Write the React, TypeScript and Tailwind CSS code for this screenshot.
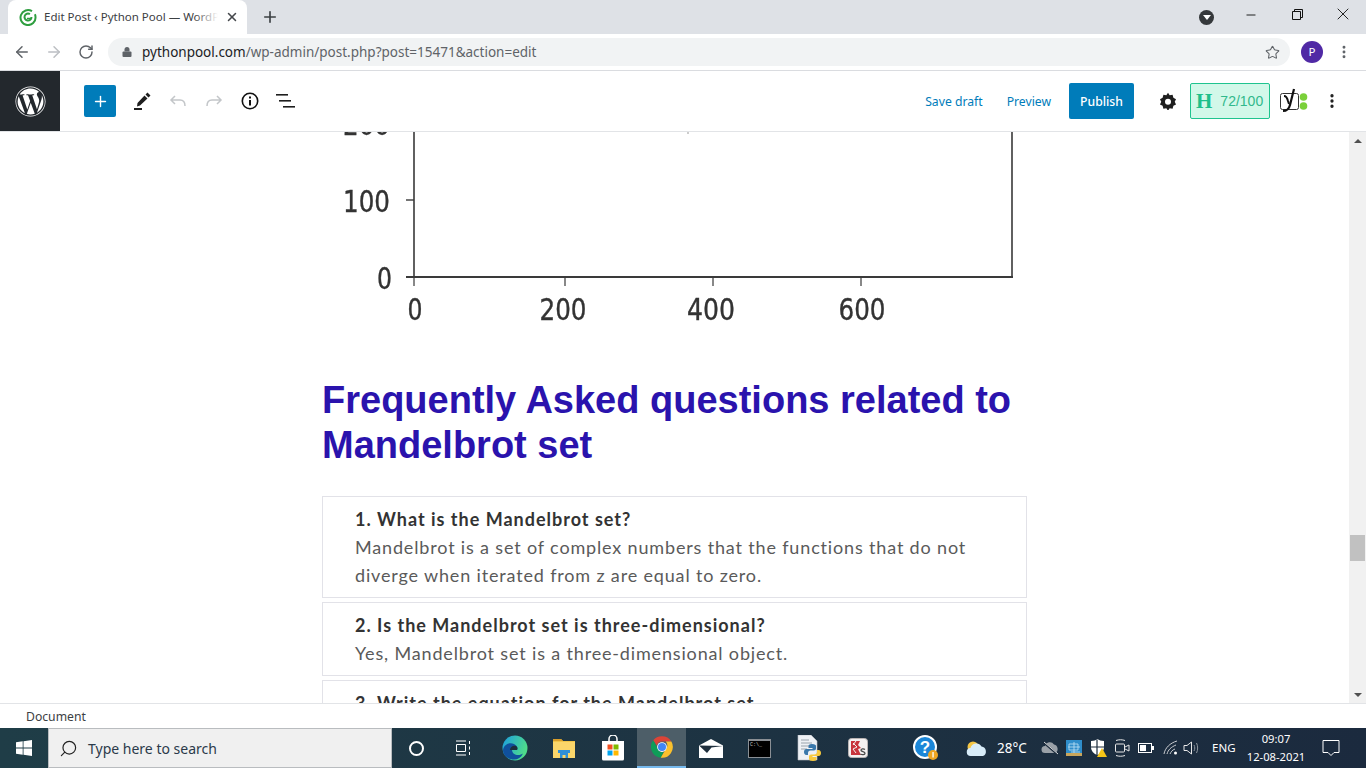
import { ArrowLeft, ArrowRight, Lock, Minus, MoreVertical, Plus, RotateCw, Search, Star, X } from 'lucide-react';
import { FaWordpress } from 'react-icons/fa';

const uiFont = "font-['Noto_Sans','Open_Sans',sans-serif]";
const arial = "font-['Liberation_Sans',Arial,sans-serif]";
const faqFont = "font-['Lato','Open_Sans',sans-serif]";

function ChartPlot() {
  const xTicks = [
    { x: 93, label: '0', w: 15 },
    { x: 241, label: '200', w: 47 },
    { x: 389, label: '400', w: 48 },
    { x: 540, label: '600', w: 47 },
  ];
  return (
    <svg width="705" height="208" viewBox="0 0 705 208" className="block blur-[0.6px]">
      <g stroke="#3a3a3a" fill="none">
        <path d="M92 -5V145M690 -5V145" strokeWidth="1.600" />
        <path d="M84 145H691" strokeWidth="2" />
        <path d="M84 68H92" strokeWidth="1.400" />
        <path d="M92 145V154M243 145V154M391 145V154M539 145V154" strokeWidth="1.200" />
      </g>
      <rect x="365" y="0" width="2" height="2" fill="#ccc" />
      <g fill="#333" stroke="#333" strokeWidth="0.4" fontFamily="DejaVu Sans" fontSize="30">
        <text x="21" y="3" textLength="47" lengthAdjust="spacingAndGlyphs">200</text>
        <text x="21" y="80" textLength="47" lengthAdjust="spacingAndGlyphs">100</text>
        <text x="55" y="157" textLength="15" lengthAdjust="spacingAndGlyphs">0</text>
        {xTicks.map(t => (
          <text key={t.label} x={t.x - t.w / 2} y="188" textLength={t.w} lengthAdjust="spacingAndGlyphs">
            {t.label}
          </text>
        ))}
      </g>
    </svg>
  );
}

function Faq({ title, lines }: { title: string; lines: string[] }) {
  return (
    <div className="border border-[#e2e2e8] pl-[32px] pr-4 py-[8px]">
      <h3 className="text-[18px] leading-[28px] font-bold text-[#333] tracking-[1px] whitespace-nowrap">{title}</h3>
      {lines.map(l => (
        <p key={l} className="text-[18px] leading-[28px] text-[#5a5a5a] tracking-[0.84px] whitespace-nowrap">{l}</p>
      ))}
    </div>
  );
}

function ChromeLogo({ size }: { size: number }) {
  return (
    <svg width={size} height={size} viewBox="0 0 48 48">
      <path d="M24 4a20 20 0 0 1 17.300 10H24a10 10 0 0 0-9.600 7.200L7.800 11.700A20 20 0 0 1 24 4z" fill="#db4437" />
      <path d="M7.800 11.700 16.400 27a10 10 0 0 0 11.200 6.300l-6 10.500A20 20 0 0 1 7.800 11.700z" fill="#0f9d58" />
      <path d="M41.300 14A20 20 0 0 1 21.600 43.800L30.200 28.900A10 10 0 0 0 31 14z" fill="#fbc02d" />
      <circle cx="24" cy="24" r="9" fill="#fff" />
      <circle cx="24" cy="24" r="7.400" fill="#4285f4" />
    </svg>
  );
}

function TaskIcons() {
  return [
    <svg key="edge" width="26" height="26" viewBox="0 0 26 26">
      <defs>
        <linearGradient id="edgeA" x1="0" y1="0" x2="1" y2="0.4">
          <stop offset="0" stopColor="#1b9de2" />
          <stop offset="1" stopColor="#4fdc8a" />
        </linearGradient>
      </defs>
      <circle cx="13" cy="13" r="12.500" fill="url(#edgeA)" />
      <path d="M1 15c1-6 7-8 11-6 3 1.500 4 4 3 6h-5c0 3 3 5 6 5 2 0 4-.6 5-1.500-2 4-5 6-9 6-6 0-11-4-11-9.500z" fill="#10509c" />
      <path d="M8 15c0-3 3-5 6-4 1.500.5 2 2.500 1 4z" fill="#1d2f3c" />
    </svg>,
    <svg key="folder" width="24" height="22" viewBox="0 0 24 22">
      <path d="M1 2h8l2 2h12v17H1z" fill="#f2c649" />
      <path d="M1 2h8l2 2H1z" fill="#d99e2b" />
      <rect x="1" y="5" width="22" height="16" fill="#fbd66a" />
      <path d="M8 21v-6h8v6h-2.500v-3h-3v3z" fill="#2f8fd8" />
      <rect x="6" y="13" width="12" height="3" fill="#2f8fd8" />
    </svg>,
    <svg key="store" width="24" height="26" viewBox="0 0 24 26">
      <path d="M8 6V4a4 4 0 0 1 8 0v2" fill="none" stroke="#fff" strokeWidth="1.500" />
      <path d="M1 6h22v18a1.500 1.500 0 0 1-1.500 1.500h-19A1.500 1.500 0 0 1 1 24z" fill="#fff" />
      <rect x="6.500" y="9.500" width="5" height="5" fill="#f25022" />
      <rect x="12.500" y="9.500" width="5" height="5" fill="#7fba00" />
      <rect x="6.500" y="15.500" width="5" height="5" fill="#00a4ef" />
      <rect x="12.500" y="15.500" width="5" height="5" fill="#ffb900" />
    </svg>,
    <ChromeLogo key="chrome" size={26} />,
    <svg key="mail" width="24" height="19" viewBox="0 0 24 19">
      <path d="M0 6.500 12 0l12 6.500V19H0z" fill="#fff" />
      <path d="M0 6.500 24 7l-11.500 1.500L8 14z" fill="#1f2f3d" />
    </svg>,
    <div key="cmd" className="w-[23px] h-[19px] bg-black border border-[#8a8f94] border-t-[2px] flex items-start pl-[1px] overflow-hidden">
      <span className="text-[5px] leading-[8px] text-[#ccc] font-['Liberation_Mono',monospace]">C:\_</span>
    </div>,
    <svg key="pydoc" width="24" height="26" viewBox="0 0 24 26">
      <path d="M1 0h13l6 6v19H1z" fill="#eef1f5" stroke="#b8bec5" strokeWidth=".6" />
      <path d="M4 5h8M4 8h11M4 11h8M4 14h6" stroke="#9aa4ad" strokeWidth="1" />
      <path d="M15 9c-3 0-3.500 1-3.500 2v2h4v1h-6c-2 0-2.500 1.500-2.500 3s.7 3 2.500 3h1.500v-2c0-1.500 1-2.500 2.500-2.500h3.500c1 0 2-.8 2-2v-2.500c0-1-1-2-4-2z" fill="#3a78ab" />
      <path d="M16 26c3 0 3.500-1 3.500-2v-2h-4v-1h6c2 0 2.500-1.500 2.500-3s-.7-3-2.500-3H20v2c0 1.500-1 2.500-2.500 2.500H14c-1 0-2 .8-2 2v2.500c0 1 1 2 4 2z" fill="#f7c93e" />
    </svg>,
    <svg key="ks" width="20" height="20" viewBox="0 0 20 20">
      <rect x=".5" y=".5" width="19" height="19" rx="3" fill="#f4f1f1" stroke="#b9b4b4" />
      <path d="M3 3h9l-2 4 3 3-3 1 3 6H3z" fill="#c8343c" />
      <path d="M5 5l4 4-4 2 3 4M8 3l-3 4" stroke="#f4f1f1" strokeWidth="1" fill="none" />
      <path d="M17 11.500c-1.500-1-4-.8-4 .8 0 1.700 4 1 4 2.900 0 1.700-3 1.700-4.500.8" stroke="#4a4a4a" strokeWidth="1.300" fill="none" />
    </svg>,
  ].map((icon, i) => (
    <div key={i} className={`w-[49px] h-full flex items-center justify-center ${i === 3 ? 'bg-[#4d5e68] border-b-2 border-[#76b9ed]' : ''}`}>
      {icon}
    </div>
  ));
}

export default function App() {
  return (
    <div className={`w-[1366px] h-[768px] flex flex-col overflow-hidden bg-white ${uiFont}`}>
      {/* chrome tabs */}
      <div className="h-[34px] shrink-0 bg-[#dee1e6] flex pl-[8px]">
        <div className="w-[239px] bg-white rounded-t-[8px] flex items-center pl-[11px] relative">
          <svg width="18" height="18" viewBox="0 0 18 18" className="shrink-0" fill="none">
            <path d="M13 3.200A7.500 7.500 0 1 0 16.500 9c0-1-.2-2-.6-2.800" stroke="#2e9e3f" strokeWidth="2" />
            <path d="M12.500 9a3.500 3.500 0 1 1-1.600-2.900" stroke="#2e9e3f" strokeWidth="2" />
            <path d="M8 10.500h4.500" stroke="#2e9e3f" strokeWidth="1.500" />
          </svg>
          <span className="ml-[7px] text-[11.500px] text-[#3c4043] whitespace-nowrap overflow-hidden w-[174px]">
            Edit Post ‹ Python Pool — WordPress
          </span>
          <div className="absolute top-0 left-[186px] w-[24px] h-full bg-gradient-to-r from-white/0 to-white" />
          <X size={14} strokeWidth={2.600} className="absolute left-[217px] text-[#45484c]" />
        </div>
        <Plus size={18} strokeWidth={2.200} className="ml-[14px] mt-[8px] text-[#3c4043]" />
        <div className="ml-auto flex items-center h-full">
          <div className="w-[15px] h-[15px] rounded-full bg-[#35383b] flex items-center justify-center mr-[14px] mt-[1px]">
            <div className="w-0 h-0 border-x-[4px] border-x-transparent border-t-[5px] border-t-white" />
          </div>
          <div className="w-[46px] flex justify-center -mt-[5px]"><Minus size={14} strokeWidth={1.600} className="text-[#111]" /></div>
          <div className="w-[46px] flex justify-center -mt-[6px]">
            <svg width="11" height="11" viewBox="0 0 11 11" fill="none" stroke="#111"><path d="M.5 2.500h8v8h-8zM2.500 2.500v-2h8v8h-2" /></svg>
          </div>
          <div className="w-[46px] flex justify-center -mt-[6px]"><X size={20} strokeWidth={1.100} className="text-[#111]" /></div>
        </div>
      </div>

      {/* address bar */}
      <div className="h-[37px] shrink-0 bg-white border-b border-[#dadce0] flex items-center">
        <ArrowLeft size={18} strokeWidth={2} className="ml-[13px] text-[#5f6368]" />
        <ArrowRight size={18} strokeWidth={2} className="ml-[14px] text-[#bcbfc3]" />
        <RotateCw size={16} strokeWidth={2.200} className="ml-[15px] text-[#5f6368]" />
        <div className="ml-[14px] w-[1182px] h-[28px] rounded-full bg-[#f1f3f4] flex items-center pl-[13px] pr-[10px]">
          <Lock size={12} strokeWidth={0} fill="#5f6368" className="shrink-0" />
          <span className="ml-[9px] text-[13.500px] text-[#5f6368] whitespace-nowrap">
            <span className="text-[#202124]">pythonpool.com</span>/wp-admin/post.php?post=15471&action=edit
          </span>
          <Star size={15} strokeWidth={1.700} className="ml-auto text-[#5f6368]" />
        </div>
        <div className="ml-[11px] w-[22px] h-[22px] rounded-full bg-[#5029a5] text-white text-[11.500px] flex items-center justify-center">P</div>
        <MoreVertical size={16} strokeWidth={2.400} className="ml-[13px] text-[#5f6368]" />
      </div>

      {/* editor header */}
      <div className="h-[61px] shrink-0 bg-white border-b border-[#e2e4e7] flex items-center">
        <div className="w-[60px] h-full bg-[#23282d] flex items-center justify-center">
          <FaWordpress size={31} className="text-white" />
        </div>
        <div className="ml-[24px] w-[32px] h-[32px] bg-[#007cba] rounded-[2px] flex items-center justify-center">
          <Plus size={17} strokeWidth={2} className="text-white" />
        </div>
        <svg width="24" height="24" viewBox="0 0 24 24" className="ml-[14px]">
          <path d="M14.500 6.500 17.500 9.500 10 16.500 7 17.500 7.500 14zM15.500 5.500 17.500 3.500 20.500 6.500 18.500 8.500z" fill="#1e1e1e" />
          <rect x="4" y="19" width="8" height="2" fill="#1e1e1e" />
        </svg>
        <svg width="20" height="20" viewBox="0 0 20 20" fill="none" stroke="#c3c6c9" strokeWidth="1.500" className="ml-[14px]">
          <path d="M7 5 3 9l4 4M3 9h9c3 0 5 2 5 6" />
        </svg>
        <svg width="20" height="20" viewBox="0 0 20 20" fill="none" stroke="#c3c6c9" strokeWidth="1.500" className="ml-[16px]">
          <path d="M13 5l4 4-4 4M17 9H8c-3 0-5 2-5 6" />
        </svg>
        <svg width="20" height="20" viewBox="0 0 20 20" className="ml-[16px]">
          <circle cx="10" cy="10" r="7.700" fill="none" stroke="#111" strokeWidth="1.600" />
          <rect x="9" y="9" width="2" height="5.500" fill="#111" />
          <rect x="9" y="5.500" width="2" height="2" fill="#111" />
        </svg>
        <svg width="20" height="16" viewBox="0 0 20 16" className="ml-[16px]" fill="#1e1e1e">
          <rect x="0" y="1" width="12" height="1.600" />
          <rect x="3" y="7" width="12" height="1.600" />
          <rect x="7" y="13" width="12" height="1.600" />
        </svg>

        <span className="ml-auto pt-[3px] text-[12.200px] text-[#007cba]">Save draft</span>
        <span className="ml-[24px] pt-[3px] text-[12.200px] text-[#007cba]">Preview</span>
        <div className="ml-[18px] w-[65px] h-[36px] pt-[3px] bg-[#007cba] rounded-[2px] text-white text-[12.200px] font-medium flex items-center justify-center">Publish</div>
        <svg width="18" height="18" viewBox="0 0 24 24" className="ml-[25px]">
          <path fillRule="evenodd" fill="#1e1e1e" d="M12 1l2.200 3.300 3.900-.5 1.100 3.800 3.500 1.900L21 13l1.700 3.500-3.500 1.900-1.100 3.800-3.900-.5L12 25l-2.200-3.300-3.900.5-1.100-3.800-3.500-1.900L3 13 1.300 9.500l3.500-1.900 1.100-3.800 3.900.5zM12 9a4 4 0 1 0 0 8 4 4 0 0 0 0-8z" />
        </svg>
        <div className="ml-[13px] w-[80px] h-[36px] border border-[#1fc48f] bg-[#d2f8e9] rounded-[2px] flex items-center pl-[5px]">
          <span className="font-['Liberation_Serif',serif] font-bold text-[21px] leading-none text-[#1fbf8b]">H</span>
          <span className={`ml-[8px] text-[14px] text-[#31b98c] ${arial}`}>72/100</span>
        </div>
        <svg width="30" height="26" viewBox="0 0 30 26" className="ml-[10px]">
          <rect x=".5" y="5.500" width="18" height="16" rx="2" fill="#fff" stroke="#333" />
          <path d="M4 8c2 0 3 1 4 5l1 3" fill="none" stroke="#111" strokeWidth="2" />
          <path d="M14 1l-4 16c-1 4-3 6-7 6" fill="none" stroke="#111" strokeWidth="2.200" />
          <circle cx="23.500" cy="9" r="3.800" fill="#7ad03a" />
          <circle cx="23.500" cy="18" r="3.800" fill="#7ad03a" />
        </svg>
        <MoreVertical size={18} strokeWidth={2.400} className="ml-[13px] mr-[25px] text-[#1e1e1e]" />
      </div>

      {/* post canvas */}
      <div className="flex-1 min-h-0 flex">
        <div className="flex-1 min-w-0 overflow-hidden">
          <div className="w-[705px] mx-auto">
            <ChartPlot />
            <h2 className={`mt-[38px] text-[38px] leading-[45px] font-bold text-[#2a13ad] ${arial}`}>
              Frequently Asked questions related to Mandelbrot set
            </h2>
            <div className={`mt-[28px] flex flex-col gap-[4px] ${faqFont}`}>
              <Faq
                title="1. What is the Mandelbrot set?"
                lines={[
                  'Mandelbrot is a set of complex numbers that the functions that do not',
                  'diverge when iterated from z are equal to zero.',
                ]}
              />
              <Faq
                title="2. Is the Mandelbrot set is three-dimensional?"
                lines={['Yes, Mandelbrot set is a three-dimensional object.']}
              />
              <Faq title="3. Write the equation for the Mandelbrot set" lines={[]} />
            </div>
          </div>
        </div>
        <div className="w-[17px] bg-[#f1f1f1] flex flex-col items-center justify-between pt-[7px] pb-[6px] relative">
          <div className="w-0 h-0 border-x-[4px] border-x-transparent border-b-[4px] border-b-[#505050]" />
          <div className="absolute top-[403px] left-[1px] w-[15px] h-[26px] bg-[#c1c1c1]" />
          <div className="w-0 h-0 border-x-[4px] border-x-transparent border-t-[4px] border-t-[#505050]" />
        </div>
      </div>

      {/* status bar */}
      <div className="h-[25px] shrink-0 bg-white border-t border-[#e2e4e7] flex items-center pl-[26px] pt-[2px] text-[12.200px] text-[#3c4043]">
        Document
      </div>

      {/* windows taskbar */}
      <div className="h-[40px] shrink-0 bg-gradient-to-r from-[#1f3d47] to-[#1b2a3e] flex items-center text-white">
        <div className="w-[48px] flex justify-center">
          <svg width="16" height="16" viewBox="0 0 16 16" fill="#fff">
            <path d="M0 2.300 6.700 1.300V7.600H0zM7.500 1.200 16 0V7.600H7.500zM0 8.400H6.700V14.700L0 13.700zM7.500 8.400H16V16L7.500 14.800z" />
          </svg>
        </div>
        <div className="w-[344px] h-full bg-[#f0f0f0] border border-[#b9bcbf] flex items-center pl-[10px]">
          <Search size={19} strokeWidth={1.500} className="text-[#222] -scale-x-100" />
          <span className="ml-[10px] text-[14px] text-[#2b3a4a]">Type here to search</span>
        </div>
        <div className="w-[48px] flex justify-center">
          <div className="w-[15px] h-[15px] rounded-full border-[2px] border-white" />
        </div>
        <div className="w-[48px] flex justify-center">
          <svg width="18" height="16" viewBox="0 0 18 16" fill="none" stroke="#fff">
            <path d="M1 1h10M1 15h10M1.500 4.500h9v7h-9zM14.500 1v3M14.500 6.500v3M14.500 12v3" />
          </svg>
        </div>
        <div className="ml-[2px] h-full flex">
          <TaskIcons />
        </div>
        <svg width="26" height="26" viewBox="0 0 26 26" className="ml-[31px]">
          <circle cx="12" cy="12" r="11" fill="#1c87d8" stroke="#fff" strokeWidth="2" />
          <text x="12" y="18" textAnchor="middle" fontFamily="Liberation Sans" fontWeight="700" fontSize="17" fill="#fff">?</text>
          <circle cx="20" cy="20" r="5" fill="#eea623" />
          <rect x="19.400" y="17" width="1.300" height="5.500" fill="#fff" />
        </svg>
        <svg width="22" height="17" viewBox="0 0 22 17" className="ml-[27px]">
          <circle cx="7" cy="7" r="5.500" fill="#f5c644" />
          <path d="M5 16a4 4 0 0 1-.5-8 6 6 0 0 1 11-1.500A5 5 0 0 1 17 16z" fill="#d8ecf8" />
        </svg>
        <span className="ml-[9px] w-[29px] text-[13.500px] whitespace-nowrap">28°C</span>
        <svg width="18" height="14" viewBox="0 0 18 14" className="ml-[15px]">
          <path d="M4 12a3.500 3.500 0 0 1 0-7 5 5 0 0 1 9-1.500A4.500 4.500 0 0 1 14 12z" fill="#9aa1a8" />
          <path d="M2 1l14 12" stroke="#1c2c3d" strokeWidth="2" />
          <path d="M3 1l14 12" stroke="#d8dadc" strokeWidth="1" />
        </svg>
        <svg width="16" height="16" viewBox="0 0 16 16" className="ml-[7px]">
          <rect width="16" height="16" fill="#2f8ecb" />
          <path d="M3 4h9v6H3zM5 12h9M2 7h12M8 2v12" stroke="#bfe2f5" strokeWidth=".8" fill="none" />
          <rect y="13" width="16" height="3" fill="#c9a55a" />
        </svg>
        <svg width="17" height="18" viewBox="0 0 17 18" className="ml-[8px]">
          <path d="M1 2c3 0 5-1 6.500-2C9 1 11 2 14 2v6c0 4-3 7-6.500 8C4 15 1 12 1 8z" fill="#fff" />
          <path d="M7 .5V16M1 8h13" stroke="#1c2c3d" strokeWidth="1.200" />
          <path d="M12 9l5 9H7z" fill="#f5c518" />
        </svg>
        <svg width="16" height="18" viewBox="0 0 16 18" fill="none" stroke="#e8e8e8" className="ml-[7px]">
          <path d="M2 1.500c3-1 6-1 9 0M2 16.500c3 1 6 1 9 0" />
          <rect x="1.500" y="5" width="9" height="8" rx="1" />
          <path d="M11 8l4-2v6l-4-2" />
        </svg>
        <svg width="16" height="10" viewBox="0 0 16 10" className="ml-[8px]">
          <rect x=".5" y=".5" width="13" height="9" fill="none" stroke="#fff" />
          <rect x="2" y="2" width="6" height="6" fill="#fff" />
          <rect x="14" y="3" width="2" height="4" fill="#fff" />
        </svg>
        <svg width="16" height="16" viewBox="0 0 16 16" fill="none" stroke="#c9ccd0" className="ml-[9px]">
          <path d="M1 14C2 8 7 3 14 1M4 14c1-4 4-7 9-9M7 14c1-2 2-4 5-5" />
          <circle cx="12.500" cy="13" r="1.500" fill="#fff" stroke="none" />
        </svg>
        <svg width="18" height="16" viewBox="0 0 18 16" fill="none" stroke="#e8e8e8" className="ml-[4px]">
          <path d="M1 5.500h3L8.500 2v12L4 10.500H1z" />
          <path d="M11 5c1 2 1 4 0 6M13.500 3c1.500 3 1.500 7 0 10" stroke="#8f979f" />
        </svg>
        <span className="ml-[11px] w-[24px] text-[11.500px] whitespace-nowrap">ENG</span>
        <div className="ml-[5px] w-[70px] flex flex-col items-center text-[11.200px] leading-[18px] whitespace-nowrap">
          <span>09:07</span>
          <span>12-08-2021</span>
        </div>
        <svg width="18" height="16" viewBox="0 0 18 16" fill="none" stroke="#fff" className="ml-[11px]">
          <path d="M1 .5h16v12h-5l-3 3-3-3H1z" />
        </svg>
      </div>
    </div>
  );
}
